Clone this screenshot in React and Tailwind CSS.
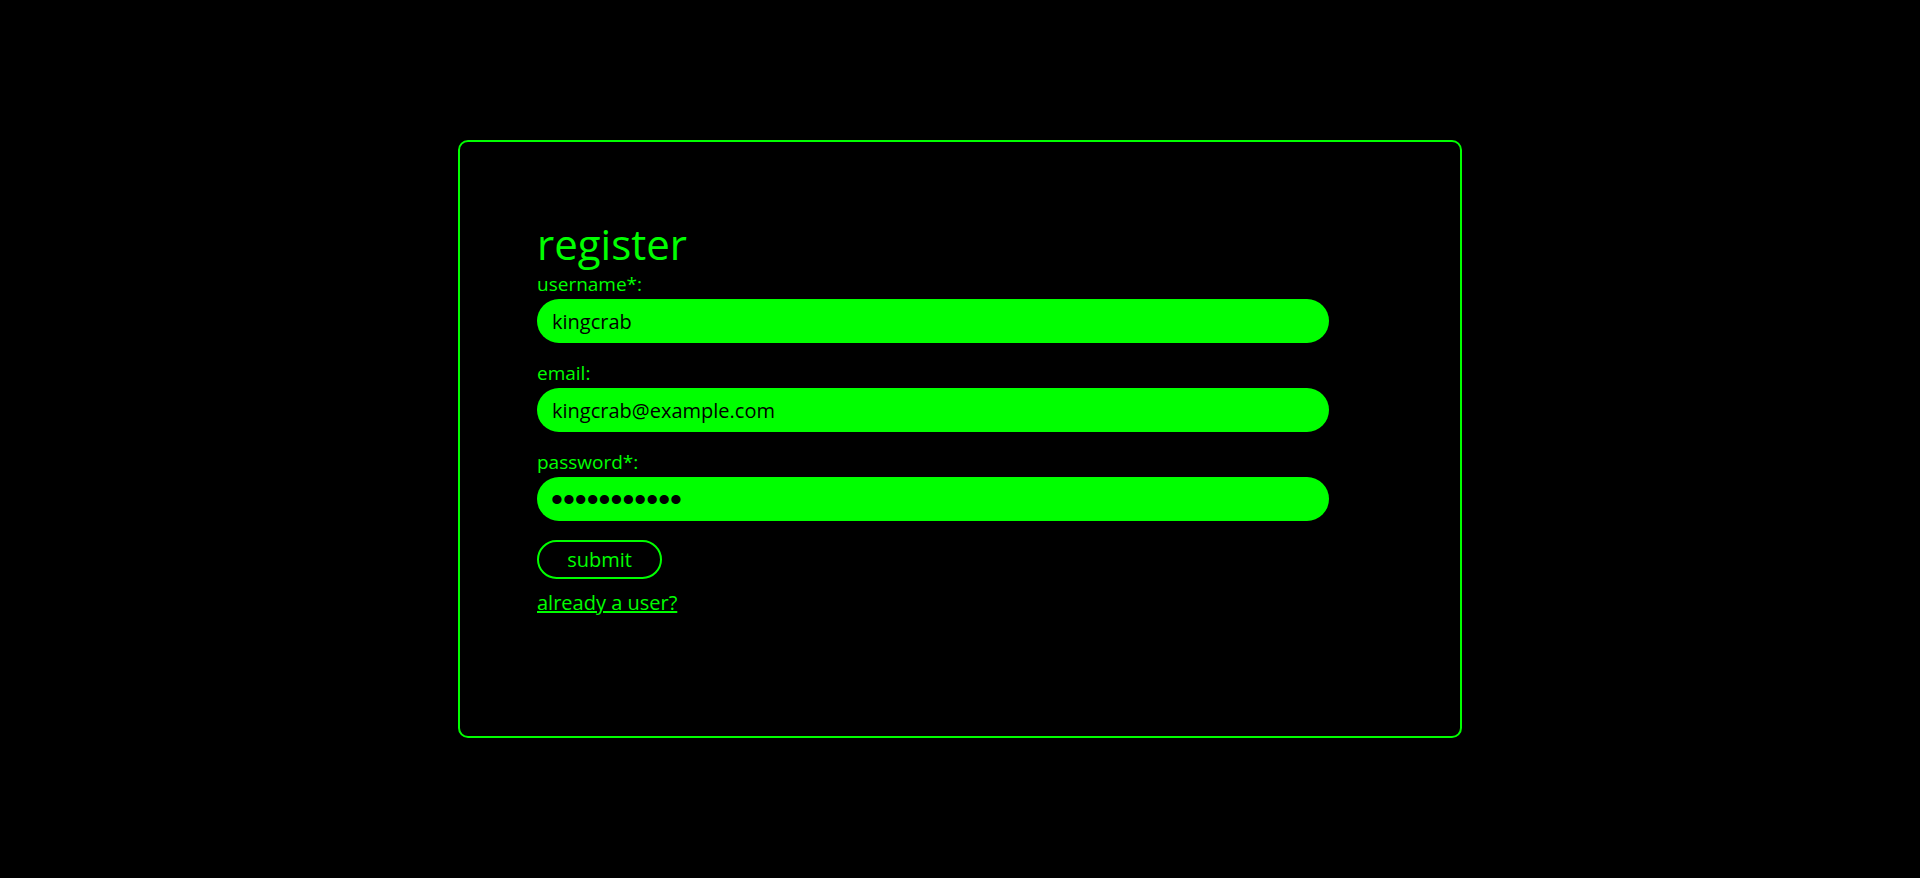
function Field({ label, type = "text", value }) {
    const isPassword = type === "password";
    return (
        <div className="flex flex-col">
            <label className="text-[19px] leading-[25px] text-[#00ff00]">{label}</label>
            <input
                type={type}
                defaultValue={value}
                className={
                    isPassword
                        ? "mt-[2px] w-[792px] h-[44px] rounded-full bg-[#00ff00] px-[14px] font-['Liberation_Sans'] text-[34px] text-black outline-none"
                        : "mt-[2px] w-[792px] h-[44px] rounded-full bg-[#00ff00] px-[15px] text-[20px] text-black outline-none"
                }
            />
        </div>
    );
}

export default function App() {
    return (
        <div
            className="flex h-[878px] w-full items-center justify-center bg-black"
            style={{ fontFamily: '"Open Sans", sans-serif' }}
        >
            <div className="h-[598px] w-[1004px] rounded-[10px] border-2 border-[#00ff00] pl-[77px] pt-[78px]">
                <h1 className="text-[42px] leading-[48px] text-[#00ff00]">register</h1>
                <form className="mt-[4px] flex flex-col gap-[18px]" onSubmit={(e) => e.preventDefault()}>
                    <Field label="username*:" value="kingcrab" />
                    <Field label="email:" value="kingcrab@example.com" />
                    <Field label="password*:" type="password" value="kingcrab123" />
                    <div className="mt-px">
                        <button
                            type="submit"
                            className="h-[39px] w-[125px] rounded-full border-2 border-[#00ff00] text-[20px] text-[#00ff00]"
                        >
                            submit
                        </button>
                    </div>
                </form>
                <a href="#" className="mt-[12px] inline-block text-[20px] leading-[24px] text-[#00ff00] underline">
                    already a user?
                </a>
            </div>
        </div>
    );
}
